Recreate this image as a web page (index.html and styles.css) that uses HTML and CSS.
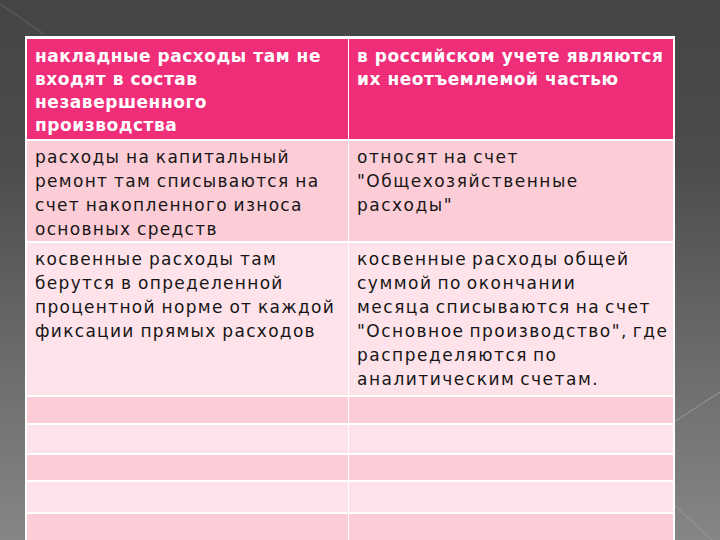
FILE: index.html
```html
<!DOCTYPE html>
<html lang="ru">
<head>
<meta charset="utf-8">
<link rel="stylesheet" href="styles.css">
</head>
<body>
<svg class="deco" width="720" height="540" viewBox="0 0 720 540" aria-hidden="true">
  <line x1="0" y1="4" x2="44" y2="34" stroke="#5a5a5a" stroke-width="1.2"/>
  <line x1="674" y1="422" x2="720" y2="392" stroke="#9a9a9a" stroke-width="1"/>
  <line x1="674" y1="505" x2="712" y2="540" stroke="#9a9a9a" stroke-width="1"/>
</svg>
<div class="slide">
  <table class="grid">
    <colgroup><col class="c1"><col class="c2"></colgroup>
    <tr class="head">
      <td>накладные расходы там не входят в состав незавершенного производства</td>
      <td>в российском учете являются их неотъемлемой частью</td>
    </tr>
    <tr class="odd r2">
      <td>расходы на капитальный ремонт там списываются на счет накопленного износа основных средств</td>
      <td class="right">относят на счет "Общехозяйственные расходы"</td>
    </tr>
    <tr class="even r3">
      <td>косвенные расходы там берутся в определенной процентной норме от каждой фиксации прямых расходов</td>
      <td class="right">косвенные расходы общей<br>суммой по окончании<br>месяца списываются на счет<br>"Основное производство", где<br>распределяются по<br>аналитическим счетам.</td>
    </tr>
    <tr class="odd e1"><td></td><td></td></tr>
    <tr class="even e2"><td></td><td></td></tr>
    <tr class="odd e3"><td></td><td></td></tr>
    <tr class="even e4"><td></td><td></td></tr>
    <tr class="odd e5"><td></td><td></td></tr>
  </table>
</div>
</body>
</html>
```
FILE: styles.css
```css
html, body {
  margin: 0;
  padding: 0;
}
body {
  width: 720px;
  height: 540px;
  overflow: hidden;
  background: linear-gradient(180deg, #454545 0%, #4c4c4c 30%, #6a6a6a 65%, #868686 100%);
  font-family: "DejaVu Sans", "Liberation Sans", sans-serif;
  position: relative;
}
.deco {
  position: absolute;
  left: 0;
  top: 0;
  z-index: 0;
}
.slide {
  position: relative;
  z-index: 1;
  padding: 37px 0 0 26px;
}
.grid {
  border-collapse: collapse;
  width: 647px;
  table-layout: fixed;
  outline: 1px solid #ffffff;
}
.c1 { width: 322px; }
.c2 { width: 325px; }
.grid td {
  border: 1px solid #ffffff;
  border-top-width: 2px;
  vertical-align: top;
  padding: 4px 7px 0 8px;
  font-size: 17px;
  line-height: 24px;
  letter-spacing: 1.3px;
  word-spacing: -1px;
  color: #161616;
}
.grid td.right {
  letter-spacing: 1.5px;
  word-spacing: -2px;
  padding-right: 4px;
  white-space: nowrap;
}
.grid tr.r2 td.right {
  white-space: normal;
  padding-right: 9px;
}
.head td {
  background: #f02d78;
  color: #ffffff;
  font-weight: bold;
  line-height: 23px;
  height: 94px;
  padding-top: 6px;
  letter-spacing: 0.55px;
  word-spacing: 0;
}
.odd td { background: #fdcdd7; }
.even td { background: #fee3ea; }
.r2 td { height: 96px; }
.r3 td { height: 148px; }
.e1 td { height: 22px; }
.e2 td { height: 24px; }
.e3 td { height: 21px; }
.e4 td { height: 26px; }
.e5 td { height: 40px; }
```
